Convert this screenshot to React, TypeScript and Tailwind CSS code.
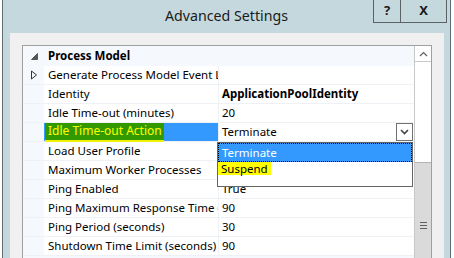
const FONT = "font-['Noto_Sans','Open_Sans',sans-serif]";

interface Row {
  label: string;
  value?: string;
  bold?: boolean;
  expand?: boolean;
}

const rows: Row[] = [
  { label: "Generate Process Model Event Log Entry", expand: true },
  { label: "Identity", value: "ApplicationPoolIdentity", bold: true },
  { label: "Idle Time-out (minutes)", value: "20" },
  { label: "Idle Time-out Action", value: "Terminate" },
  { label: "Load User Profile" },
  { label: "Maximum Worker Processes" },
  { label: "Ping Enabled", value: "True" },
  { label: "Ping Maximum Response Time (seconds)", value: "90" },
  { label: "Ping Period (seconds)", value: "30" },
  { label: "Shutdown Time Limit (seconds)", value: "90" },
];

function ActionRow() {
  return (
    <div className="flex h-[19px] border-b border-[#eef1f6]">
      <div className="w-[21px] shrink-0" />
      <div className="flex w-[174px] shrink-0 items-center bg-[#3399ff] pl-[1px]">
        <div className="flex h-[19px] w-[119px] items-center border-b-2 border-[#f2f200] bg-[#339900] pl-[3px] text-[12px] text-[#ffff00]">
          Idle Time-out Action
        </div>
      </div>
      <div className="relative flex flex-1 items-center border-l border-[#eef1f6] bg-white pl-[3px]">
        <span>Terminate</span>
        <div className="ml-auto mr-[1px] flex h-[18px] w-[17px] items-center justify-center border border-[#707070] bg-white">
          <svg width="9" height="6" viewBox="0 0 9 6">
            <path d="M1 1 L4.5 4.5 L8 1" fill="none" stroke="#444" strokeWidth="1.6" />
          </svg>
        </div>
        {/* open dropdown list */}
        <div className="absolute left-[-2px] top-[19px] z-10 h-[45px] w-[196px] border border-[#646464] bg-white">
          <div className="flex h-[19px] items-center border border-dotted border-black bg-[#3399ff] pl-[3px] text-white">
            Terminate
          </div>
          <div className="flex">
            <div className="flex h-[13px] items-center bg-[#ffff00] pl-[3px] pr-[3px] leading-none text-black">
              Suspend
            </div>
          </div>
        </div>
      </div>
    </div>
  );
}

function PropRow({ row }: { row: Row }) {
  return (
    <div className="flex h-[19px] border-b border-[#eef1f6]">
      <div className="flex w-[21px] shrink-0 items-center justify-center">
        {row.expand && (
          <svg width="8" height="10" viewBox="0 0 8 10">
            <path d="M1.5 1 L6.5 5 L1.5 9 Z" fill="none" stroke="#333" strokeWidth="1" />
          </svg>
        )}
      </div>
      <div className="flex w-[174px] shrink-0 items-center overflow-hidden whitespace-nowrap bg-white pl-[4px]">
        {row.label}
      </div>
      <div
        className={`flex flex-1 items-center border-l border-[#eef1f6] bg-white pl-[3px] ${
          row.bold ? "font-bold" : ""
        }`}
      >
        {row.value}
      </div>
    </div>
  );
}

function ScrollBar() {
  return (
    <div className="flex w-[17px] shrink-0 flex-col border-l border-[#c8c8c8] bg-white">
      <div className="flex h-[16px] items-center justify-center border-b border-[#c8c8c8]">
        <svg width="9" height="6" viewBox="0 0 9 6">
          <path d="M1 5 L4.5 1.5 L8 5" fill="none" stroke="#606060" strokeWidth="1.2" />
        </svg>
      </div>
      <div className="h-[100px]" />
      <div className="flex flex-1 flex-col items-center border-t border-[#b4b4b4] bg-[#dadada] pt-[59px]">
        <div className="flex w-[7px] flex-col gap-[2px]">
          <div className="h-[1px] bg-[#606060]" />
          <div className="h-[1px] bg-[#606060]" />
          <div className="h-[1px] bg-[#606060]" />
        </div>
      </div>
    </div>
  );
}

export default function App() {
  return (
    <div className={`h-[258px] w-[454px] overflow-hidden bg-white text-[11.5px] text-black ${FONT}`}>
      <div className="ml-[2px] flex h-[260px] w-[449px] flex-col border-x border-[#5f6e74] bg-[#c4d8de]">
        <div className="relative flex h-[33px] shrink-0 items-center justify-center pb-[1px] text-[14.2px] text-[#1b1b1b]">
          Advanced Settings
          <div className="absolute right-[3px] top-0 flex h-[23px]">
            <div className="flex w-[28px] items-center justify-center border-x border-b border-[#5b6266] text-[13px] font-bold">
              ?
            </div>
            <div className="flex w-[46px] items-center justify-center border-r border-b border-[#5b6266] text-[13px] font-bold">
              X
            </div>
          </div>
        </div>
        <div className="ml-[7px] mr-[6px] flex-1 bg-[#f0f0f0] pl-[12px] pr-[12px] pt-[12px]">
          <div className="flex h-full border-l border-r border-t border-[#a0a0a0] bg-[#f5f8fc]">
            <div className="flex-1">
              <div className="flex h-[20px] items-center">
                <div className="flex w-[21px] shrink-0 items-center justify-center pl-[1px]">
                  <svg width="7" height="7" viewBox="0 0 7 7">
                    <path d="M6.5 0.5 L6.5 6.5 L0.5 6.5 Z" fill="#555" stroke="#444" strokeWidth="0.8" />
                  </svg>
                </div>
                <span className="pl-[4px] font-bold">Process Model</span>
              </div>
              {rows.map((row) =>
                row.label === "Idle Time-out Action" ? (
                  <ActionRow key={row.label} />
                ) : (
                  <PropRow key={row.label} row={row} />
                )
              )}
            </div>
            <ScrollBar />
          </div>
        </div>
      </div>
    </div>
  );
}
